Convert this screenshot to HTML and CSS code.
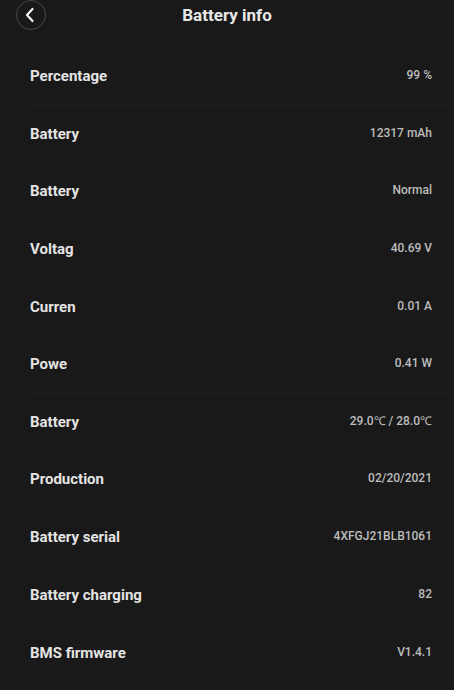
FILE: index.html
```html
<!DOCTYPE html>
<html lang="en">
<head>
    <meta charset="UTF-8">
    <title>Battery info</title>
    <link rel="stylesheet" href="styles.css">
</head>
<body>
    <div class="cabecera">
        <button class="boton-atras">
            <svg width="12" height="16" viewBox="0 0 12 16"><path d="M8.5 2 L3 8 L8.5 14" fill="none" stroke="#f2f2f2" stroke-width="2.2" stroke-linecap="round" stroke-linejoin="round"/></svg>
        </button>
        <h1>Battery info</h1>
    </div>

    <div class="lista">
        <div class="fila"><span class="etiqueta">Percentage</span><span class="valor">99 %</span></div>
        <div class="fila"><span class="etiqueta">Battery</span><span class="valor">12317 mAh</span></div>
        <div class="fila"><span class="etiqueta">Battery</span><span class="valor">Normal</span></div>
        <div class="fila"><span class="etiqueta">Voltag</span><span class="valor">40.69 V</span></div>
        <div class="fila"><span class="etiqueta">Curren</span><span class="valor">0.01 A</span></div>
        <div class="fila"><span class="etiqueta">Powe</span><span class="valor">0.41 W</span></div>
        <div class="fila"><span class="etiqueta">Battery</span><span class="valor">29.0℃ / 28.0℃</span></div>
        <div class="fila"><span class="etiqueta">Production</span><span class="valor">02/20/2021</span></div>
        <div class="fila"><span class="etiqueta">Battery serial</span><span class="valor">4XFGJ21BLB1061</span></div>
        <div class="fila"><span class="etiqueta">Battery charging</span><span class="valor">82</span></div>
        <div class="fila"><span class="etiqueta">BMS firmware</span><span class="valor">V1.4.1</span></div>
    </div>
</body>
</html>
```

FILE: styles.css
```css
body {
    background: #191919;
    font-family: 'Roboto', 'Liberation Sans', sans-serif;
    margin: 0;
    padding: 0;
    color: #e6e6e6;
}

.cabecera {
    position: relative;
    height: 31px;
    display: flex;
    align-items: center;
    justify-content: center;
}

.boton-atras {
    position: absolute;
    left: 16px;
    top: 0;
    width: 30px;
    height: 30px;
    border-radius: 50%;
    border: 1px solid #4a4a4a;
    background: transparent;
    padding: 0;
    display: flex;
    align-items: center;
    justify-content: center;
}

.boton-atras svg {
    margin-left: -2px;
}

h1 {
    margin: 0;
    font-size: 17px;
    font-weight: 700;
    color: #e8e8e8;
    line-height: 31px;
}

.lista {
    padding-top: 16px;
}

.fila {
    height: 57.6px;
    box-sizing: border-box;
    margin-left: 30px;
    padding-right: 22px;
    display: flex;
    align-items: center;
    justify-content: space-between;
    border-bottom: 1px solid #1e1e1e;
}

.fila:last-child {
    border-bottom: none;
}

.etiqueta {
    font-size: 15px;
    font-weight: 700;
    line-height: 18px;
    color: #e4e4e4;
    padding-top: 2px;
}

.valor {
    font-size: 12px;
    font-weight: 500;
    color: #bdbdbd;
}
```
